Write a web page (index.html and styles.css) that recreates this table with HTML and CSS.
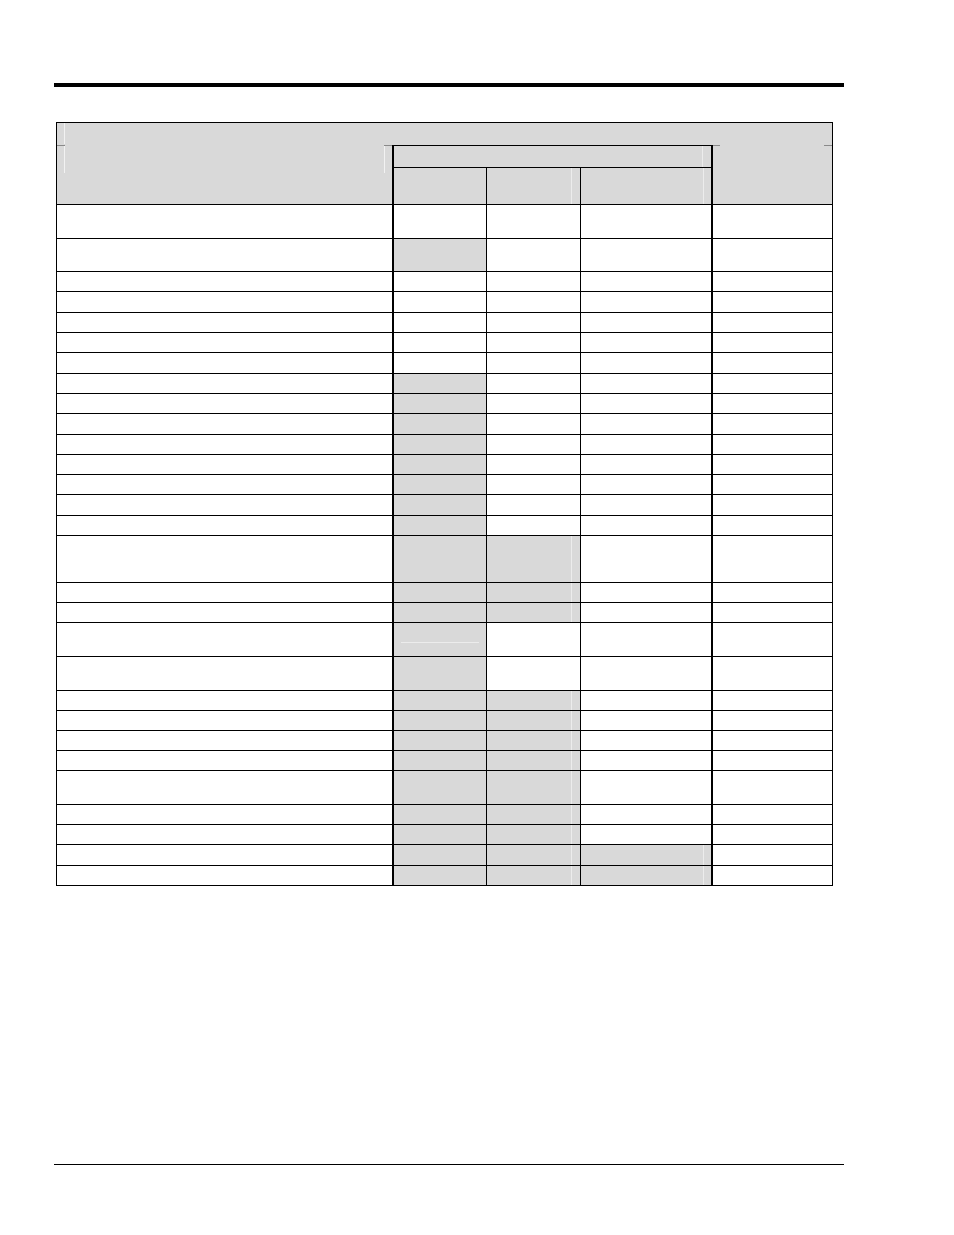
FILE: index.html
```html
<!DOCTYPE html>
<html lang="en">
<head>
<meta charset="utf-8">
<title>Table</title>
<link rel="stylesheet" href="styles.css">
</head>
<body>
<div class="page">
  <div class="top-rule"></div>
  <div class="grid" role="table">
    <div class="hd-a"></div>
    <div class="hd-left"></div>
    <div class="hd-group"></div>
    <div class="hd-right"></div>
    <div class="hd-sub"></div>
    <div class="hd-sub"></div>
    <div class="hd-sub thick"></div>

    <div class="row"><div></div><div></div><div></div><div></div><div></div></div>
    <div class="row"><div></div><div class="g"></div><div></div><div></div><div></div></div>
    <div class="row"><div></div><div></div><div></div><div></div><div></div></div>
    <div class="row"><div></div><div></div><div></div><div></div><div></div></div>
    <div class="row"><div></div><div></div><div></div><div></div><div></div></div>
    <div class="row"><div></div><div></div><div></div><div></div><div></div></div>
    <div class="row"><div></div><div></div><div></div><div></div><div></div></div>
    <div class="row"><div></div><div class="g"></div><div></div><div></div><div></div></div>
    <div class="row"><div></div><div class="g"></div><div></div><div></div><div></div></div>
    <div class="row"><div></div><div class="g"></div><div></div><div></div><div></div></div>
    <div class="row"><div></div><div class="g"></div><div></div><div></div><div></div></div>
    <div class="row"><div></div><div class="g"></div><div></div><div></div><div></div></div>
    <div class="row"><div></div><div class="g"></div><div></div><div></div><div></div></div>
    <div class="row"><div></div><div class="g"></div><div></div><div></div><div></div></div>
    <div class="row"><div></div><div class="g"></div><div></div><div></div><div></div></div>
    <div class="row"><div></div><div class="g"></div><div class="g"></div><div></div><div></div></div>
    <div class="row"><div></div><div class="g"></div><div class="g"></div><div></div><div></div></div>
    <div class="row"><div></div><div class="g"></div><div class="g"></div><div></div><div></div></div>
    <div class="row"><div></div><div class="g mark"></div><div></div><div></div><div></div></div>
    <div class="row"><div></div><div class="g"></div><div></div><div></div><div></div></div>
    <div class="row"><div></div><div class="g"></div><div class="g"></div><div></div><div></div></div>
    <div class="row"><div></div><div class="g"></div><div class="g"></div><div></div><div></div></div>
    <div class="row"><div></div><div class="g"></div><div class="g"></div><div></div><div></div></div>
    <div class="row"><div></div><div class="g"></div><div class="g"></div><div></div><div></div></div>
    <div class="row"><div></div><div class="g"></div><div class="g"></div><div></div><div></div></div>
    <div class="row"><div></div><div class="g"></div><div class="g"></div><div></div><div></div></div>
    <div class="row"><div></div><div class="g"></div><div class="g"></div><div></div><div></div></div>
    <div class="row"><div></div><div class="g"></div><div class="g"></div><div class="g"></div><div></div></div>
    <div class="row"><div></div><div class="g"></div><div class="g"></div><div class="g"></div><div></div></div>
  </div>
  <div class="bottom-rule"></div>
</div>
</body>
</html>
```
FILE: styles.css
```css
* { box-sizing: border-box; }

html, body {
  margin: 0;
  padding: 0;
  background: #ffffff;
  font-family: "Liberation Sans", Arial, sans-serif;
}

.page {
  width: 954px;
  padding: 83px 0 0 54px;
  height: 1235px;
}

.top-rule {
  width: 790px;
  height: 4px;
  background: #000000;
}

.bottom-rule {
  width: 790px;
  height: 1px;
  background: #000000;
  margin-top: 278px;
}

.grid {
  margin: 35px 0 0 2px;
  display: grid;
  width: 777px;
  grid-template-columns: 337px 93px 94px 132px 120px;
  grid-template-rows:
    22px 23px 37px
    34px 33px 20px 21px 20px 20px 21px 20px 20px 21px
    20px 20px 20px 21px 20px 47px 20px 20px 34px 34px
    20px 20px 20px 20px 34px 20px 20px 21px 20px;
  border-top: 1px solid #000;
  border-left: 1px solid #000;
}

/* header */
.hd-a {
  grid-column: 1 / -1;
  grid-row: 1;
  border-right: 1px solid #000;
  background:
    linear-gradient(#f2f2f2, #f2f2f2) 7px 0 / 1px 21px no-repeat,
    #d9d9d9;
}

.hd-left {
  grid-column: 1;
  grid-row: 2 / 4;
  border-right: 2px solid #000;
  border-bottom: 1px solid #000;
  background:
    linear-gradient(#8a8a8a, #8a8a8a) left top / 8px 1px no-repeat,
    linear-gradient(#8a8a8a, #8a8a8a) right top / 8px 1px no-repeat,
    linear-gradient(#f2f2f2, #f2f2f2) 7px 1px / 1px 27px no-repeat,
    linear-gradient(#f2f2f2, #f2f2f2) 327px 1px / 1px 27px no-repeat,
    #d9d9d9;
}

.hd-group {
  grid-column: 2 / 5;
  grid-row: 2;
  border-top: 1px solid #000;
  border-bottom: 1px solid #000;
  border-right: 2px solid #000;
  background:
    linear-gradient(#ececec, #ececec) 308px 0 / 1px 100% no-repeat,
    #d9d9d9;
}

.hd-right {
  grid-column: 5;
  grid-row: 2 / 4;
  border-right: 1px solid #000;
  border-bottom: 1px solid #000;
  background:
    linear-gradient(#8a8a8a, #8a8a8a) left top / 7px 1px no-repeat,
    linear-gradient(#8a8a8a, #8a8a8a) right top / 8px 1px no-repeat,
    #d9d9d9;
}

.hd-sub {
  grid-row: 3;
  border-right: 1px solid #000;
  border-bottom: 1px solid #000;
  background: #d9d9d9;
}

.hd-sub:nth-of-type(6) {
  background:
    linear-gradient(#ececec, #ececec) 84px 0 / 1px 100% no-repeat,
    #d9d9d9;
}

.hd-sub.thick {
  border-right-width: 2px;
  background:
    linear-gradient(#ececec, #ececec) 122px 0 / 1px 100% no-repeat,
    #d9d9d9;
}

/* body rows */
.row {
  display: contents;
}

.row > div {
  background-color: #ffffff;
  border-right: 1px solid #000;
  border-bottom: 1px solid #000;
}

.row > div:nth-child(1),
.row > div:nth-child(4) {
  border-right-width: 2px;
}

.row > div.g {
  background-color: #d9d9d9;
}

.row > div.g.mark {
  background:
    linear-gradient(#ececec, #ececec) 7px 19px / 78px 1px no-repeat,
    #d9d9d9;
}

.row > div.g:nth-child(3) {
  background:
    linear-gradient(#ececec, #ececec) 84px 0 / 1px 100% no-repeat,
    #d9d9d9;
}

.row > div.g:nth-child(4) {
  background:
    linear-gradient(#ececec, #ececec) 122px 0 / 1px 100% no-repeat,
    #d9d9d9;
}
```
